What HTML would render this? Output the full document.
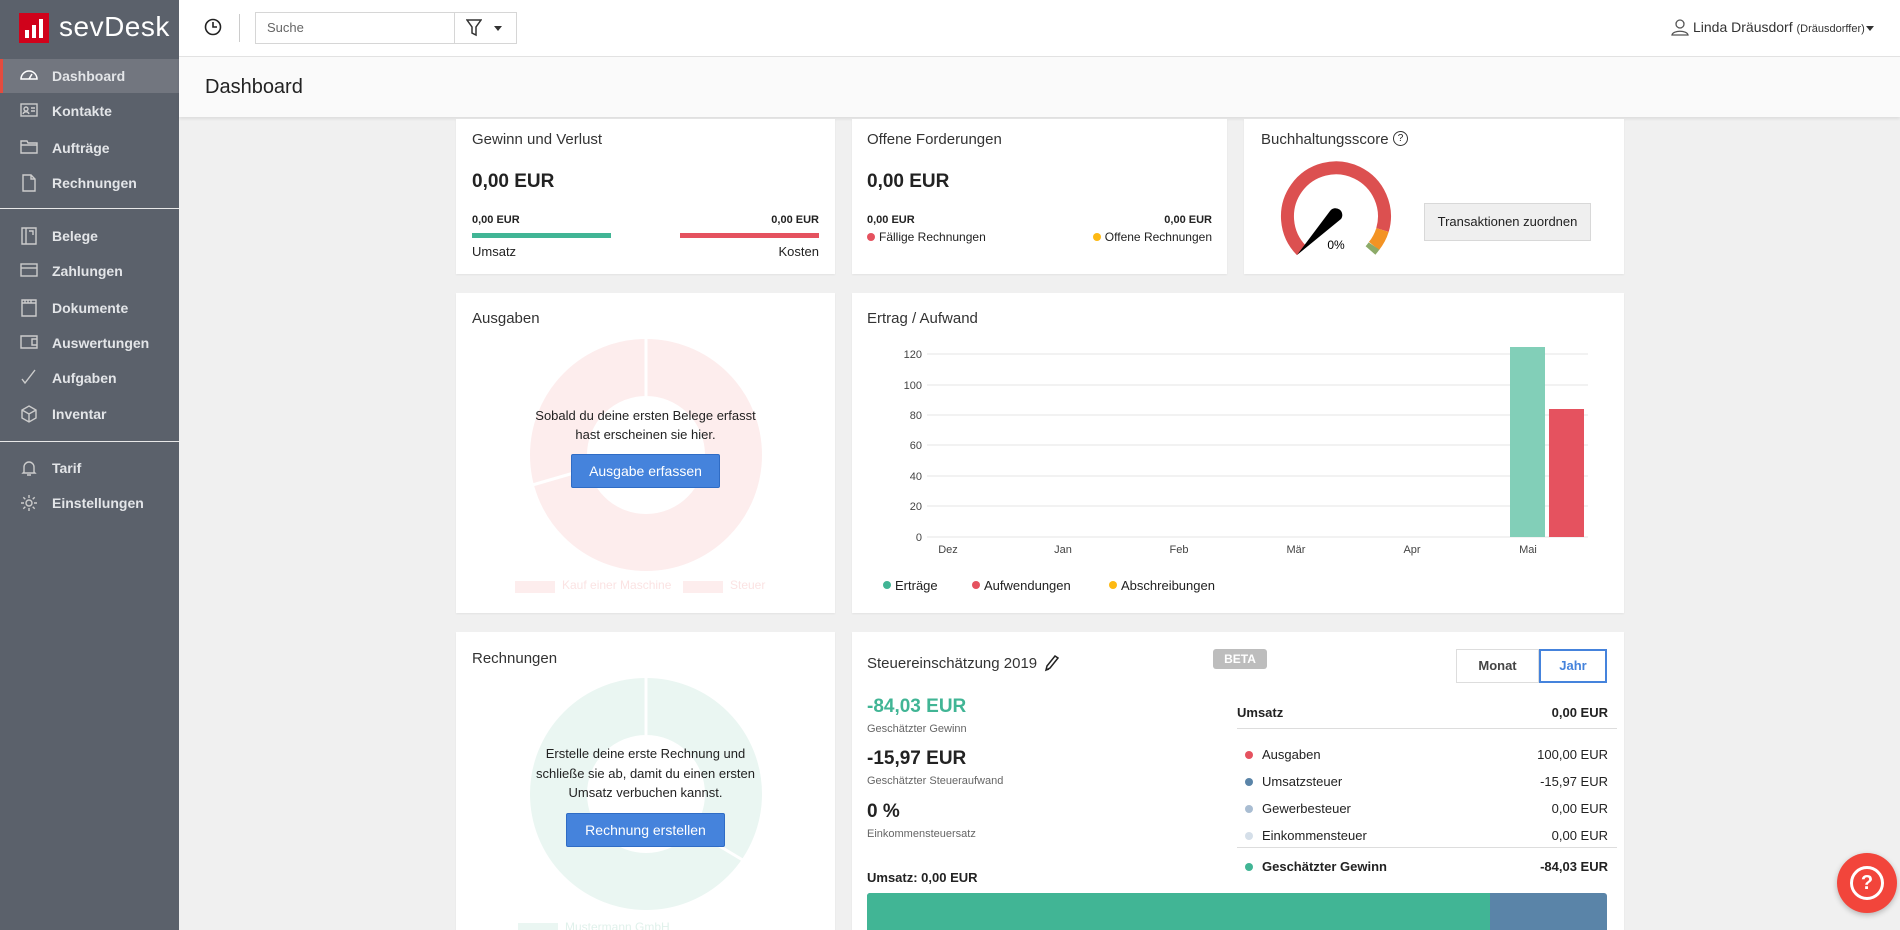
<!DOCTYPE html>
<html style="overflow:hidden;width:1900px;height:930px"><head><meta charset="utf-8"><style>
*{box-sizing:border-box;margin:0;padding:0}
body{width:1900px;height:930px;overflow:hidden;background:#f0f0f0;font-family:"Liberation Sans",sans-serif;color:#222;position:relative}
.a{position:absolute;white-space:nowrap}
#side{position:absolute;left:0;top:0;width:179px;height:930px;background:#5b616b}
.nav{position:absolute;left:0;width:179px;height:36px;color:#e3e5e8;font-weight:bold;font-size:14px;line-height:36px;padding-left:52px}
.nav svg{position:absolute;left:20px;top:9px}
.act{background:#72767f;border-left:3px solid #e44b3e;padding-left:49px}
.act svg{left:17px}
.sep{position:absolute;left:0;width:179px;height:2px;background:#e8e8e8}
.card{position:absolute;background:#fff;box-shadow:0 1px 2px rgba(0,0,0,.06);overflow:hidden}
.t{font-size:15px;color:#333}
.btn{position:absolute;background:#4583dc;border:1px solid #2f6cc5;color:#fff;font-size:14px;text-align:center;border-radius:2px}
</style></head><body>
<div id="side">
 <div class="a" style="left:19px;top:13px;width:30px;height:30px;background:#d0021b"></div>
 <div class="a" style="left:25px;top:30px;width:4px;height:8px;background:#fff"></div>
 <div class="a" style="left:32px;top:25px;width:4px;height:13px;background:#fff"></div>
 <div class="a" style="left:39px;top:19px;width:4px;height:19px;background:#fff"></div>
 <div class="a" style="left:59px;top:11px;font-size:28px;color:#fff;letter-spacing:.5px"><span style="font-weight:300">sev</span>Desk</div>
 <div class="nav act" style="top:59px;height:34px;line-height:34px"><svg width="18" height="16" viewBox="0 0 18 16" fill="none" stroke="#fff" stroke-width="1.5"><path d="M1 11a8 8 0 0 1 16 0z M9 11l3-5"/></svg>Dashboard</div>
 <div class="nav" style="top:93px"><svg width="18" height="16" viewBox="0 0 18 16" fill="none" stroke="#ccc" stroke-width="1.4"><rect x="1" y="2" width="16" height="12"/><circle cx="6" cy="7" r="2"/><path d="M3 12c1-3 5-3 6 0M11 6h4M11 9h4"/></svg>Kontakte</div>
 <div class="nav" style="top:130px"><svg width="18" height="16" viewBox="0 0 18 16" fill="none" stroke="#ccc" stroke-width="1.4"><path d="M1 2h6l1 2h9v10H1zM1 6h16"/></svg>Aufträge</div>
 <div class="nav" style="top:165px"><svg width="18" height="18" viewBox="0 0 18 18" fill="none" stroke="#ccc" stroke-width="1.4"><path d="M3 1h8l4 4v12H3zM11 1v4h4"/></svg>Rechnungen</div>
 <div class="sep" style="top:208px;height:1px"></div>
 <div class="nav" style="top:218px"><svg width="18" height="18" viewBox="0 0 18 18" fill="none" stroke="#ccc" stroke-width="1.4"><path d="M2 1h14v16H2zM6 1v16M9 4h4v4"/></svg>Belege</div>
 <div class="nav" style="top:253px"><svg width="18" height="16" viewBox="0 0 18 16" fill="none" stroke="#ccc" stroke-width="1.4"><rect x="1" y="2" width="16" height="12"/><path d="M1 6h16"/></svg>Zahlungen</div>
 <div class="nav" style="top:290px"><svg width="18" height="18" viewBox="0 0 18 18" fill="none" stroke="#ccc" stroke-width="1.4"><path d="M2 1h14v16H2zM2 4h14M5 1v3M8 1v3M11 1v3"/></svg>Dokumente</div>
 <div class="nav" style="top:325px"><svg width="18" height="16" viewBox="0 0 18 16" fill="none" stroke="#ccc" stroke-width="1.4"><path d="M1 2h16v12H1zM17 5h-5v6h5"/></svg>Auswertungen</div>
 <div class="nav" style="top:360px"><svg width="18" height="16" viewBox="0 0 18 16" fill="none" stroke="#ccc" stroke-width="1.4"><path d="M2 10l3 4L15 1"/></svg>Aufgaben</div>
 <div class="nav" style="top:396px"><svg width="18" height="18" viewBox="0 0 18 18" fill="none" stroke="#ccc" stroke-width="1.4"><path d="M9 1l7 4v8l-7 4-7-4V5zM2 5l7 4 7-4M9 9v8"/></svg>Inventar</div>
 <div class="sep" style="top:441px;height:1px"></div>
 <div class="nav" style="top:450px"><svg width="18" height="18" viewBox="0 0 18 18" fill="none" stroke="#ccc" stroke-width="1.4"><path d="M4 13V8a5 5 0 0 1 10 0v5l1 1H3zM7 16h4"/></svg>Tarif</div>
 <div class="nav" style="top:485px"><svg width="18" height="18" viewBox="0 0 18 18" fill="none" stroke="#ccc" stroke-width="1.4"><circle cx="9" cy="9" r="3"/><path d="M9 1v3M9 14v3M1 9h3M14 9h3M3.3 3.3l2 2M12.7 12.7l2 2M3.3 14.7l2-2M12.7 5.3l2-2"/></svg>Einstellungen</div>
</div>
<!-- topbar -->
<div class="a" style="left:179px;top:0;width:1721px;height:57px;background:#fff;border-bottom:1px solid #e2e2e2"></div>
<svg class="a" style="left:204px;top:18px" width="18" height="18" viewBox="0 0 18 18" fill="none" stroke="#222" stroke-width="1.6"><circle cx="9" cy="9" r="7.5"/><path d="M9 4v5h4"/></svg>
<div class="a" style="left:239px;top:14px;width:1px;height:28px;background:#ccc"></div>
<div class="a" style="left:255px;top:12px;width:262px;height:32px;border:1px solid #d6d6d6;background:#fff"></div>
<div class="a" style="left:454px;top:12px;width:1px;height:32px;background:#d6d6d6"></div>
<div class="a" style="left:267px;top:20px;font-size:13px;color:#666">Suche</div>
<svg class="a" style="left:466px;top:19px" width="16" height="18" viewBox="0 0 16 18" fill="none" stroke="#333" stroke-width="1.5"><path d="M1 1h14l-5 7v8l-4-2V8z"/></svg>
<div class="a" style="left:494px;top:26px;width:0;height:0;border-left:4px solid transparent;border-right:4px solid transparent;border-top:5px solid #333"></div>
<svg class="a" style="left:1671px;top:18px" width="18" height="18" viewBox="0 0 18 18" fill="none" stroke="#555" stroke-width="1.3"><circle cx="9" cy="6" r="4"/><path d="M1 17c1-5 15-5 16 0z"/></svg>
<div class="a" style="left:1693px;top:19px;font-size:14px;color:#333">Linda Dräusdorf <span style="font-size:11px">(Dräusdorffer)</span></div>
<div class="a" style="left:1866px;top:26px;width:0;height:0;border-left:4px solid transparent;border-right:4px solid transparent;border-top:5px solid #333"></div>
<!-- header -->
<div class="a" style="left:179px;top:57px;width:1721px;height:60px;background:#fafafa;box-shadow:0 2px 3px rgba(0,0,0,.08)"></div>
<div class="a" style="left:205px;top:76px;font-size:20px;color:#222">Dashboard</div>

<!-- row1 -->
<div class="card" style="left:456px;top:119px;width:379px;height:155px">
 <div class="a t" style="left:16px;top:12px">Gewinn und Verlust</div>
 <div class="a" style="left:16px;top:52px;font-size:19px;font-weight:bold">0,00 EUR</div>
 <div class="a" style="left:16px;top:95px;font-size:11px;font-weight:bold">0,00 EUR</div>
 <div class="a" style="right:16px;top:95px;font-size:11px;font-weight:bold">0,00 EUR</div>
 <div class="a" style="left:16px;top:114px;width:139px;height:5px;background:#41b595"></div>
 <div class="a" style="left:224px;top:114px;width:139px;height:5px;background:#e5525f"></div>
 <div class="a" style="left:16px;top:125px;font-size:13px">Umsatz</div>
 <div class="a" style="right:16px;top:125px;font-size:13px">Kosten</div>
</div>
<div class="card" style="left:852px;top:119px;width:375px;height:155px">
 <div class="a t" style="left:15px;top:12px">Offene Forderungen</div>
 <div class="a" style="left:15px;top:52px;font-size:19px;font-weight:bold">0,00 EUR</div>
 <div class="a" style="left:15px;top:95px;font-size:11px;font-weight:bold">0,00 EUR</div>
 <div class="a" style="right:15px;top:95px;font-size:11px;font-weight:bold">0,00 EUR</div>
 <div class="a" style="left:15px;top:111px;font-size:12px"><span style="display:inline-block;width:8px;height:8px;border-radius:50%;background:#e5525f;margin-right:4px"></span>Fällige Rechnungen</div>
 <div class="a" style="right:15px;top:111px;font-size:12px"><span style="display:inline-block;width:8px;height:8px;border-radius:50%;background:#fdb913;margin-right:4px"></span>Offene Rechnungen</div>
</div>
<div class="card" style="left:1244px;top:119px;width:380px;height:155px">
 <div class="a t" style="left:17px;top:12px">Buchhaltungsscore</div>
 <div class="a" style="left:149px;top:12px;width:15px;height:15px;border:1.3px solid #333;border-radius:50%;font-size:10px;text-align:center;line-height:13px">?</div>
 <svg class="a" style="left:0;top:0" width="380" height="155">
  <g transform="translate(92,97)" fill="none" stroke-width="13">
   <path d="M-34.5 34.5 A48.5 48.5 0 1 1 46.5 14" stroke="#dc5050"/>
   <path d="M46.5 14 A48.5 48.5 0 0 1 38 30" stroke="#f39324"/>
   <path d="M38 30 A48.5 48.5 0 0 1 34.5 34.5" stroke="#8caa68"/>
  </g>
  <path d="M53 136 L86 92 A6 6 0 0 1 97 100 Z" fill="#000"/>
  <text x="92" y="130" font-size="12" text-anchor="middle" font-family="Liberation Sans">0%</text>
 </svg>
 <div class="a" style="left:180px;top:84px;width:167px;height:38px;background:#efefef;border:1px solid #d8d8d8;font-size:13px;line-height:36px;text-align:center">Transaktionen zuordnen</div>
</div>

<!-- row2 -->
<div class="card" style="left:456px;top:293px;width:379px;height:320px">
 <div class="a t" style="left:16px;top:17px">Ausgaben</div>
 <svg class="a" style="left:0;top:0" width="379" height="320"><g transform="translate(190,162)" fill="none" stroke="#fdeded" stroke-width="57"><circle r="87.5"/></g><path d="M190 45v58M128 177l-55 16" stroke="#fff" stroke-width="3"/></svg>
 <div class="a" style="left:0;width:379px;top:113px;text-align:center;font-size:13px;line-height:19px;white-space:normal">Sobald du deine ersten Belege erfasst<br>hast erscheinen sie hier.</div>
 <div class="btn" style="left:115px;top:161px;width:149px;height:34px;line-height:32px">Ausgabe erfassen</div>
 <div class="a" style="left:59px;top:288px;width:40px;height:12px;background:#fdeded"></div>
 <div class="a" style="left:106px;top:285px;font-size:12px;color:#fbe3e3">Kauf einer Maschine</div>
 <div class="a" style="left:227px;top:288px;width:40px;height:12px;background:#fdeded"></div>
 <div class="a" style="left:274px;top:285px;font-size:12px;color:#fbe3e3">Steuer</div>
</div>
<div class="card" style="left:852px;top:293px;width:772px;height:320px">
 <div class="a t" style="left:15px;top:17px">Ertrag / Aufwand</div>
 <svg class="a" style="left:0;top:0" width="772" height="320" font-family="Liberation Sans" font-size="11" fill="#444">
  <g stroke="#e4e4e4" stroke-width="1">
   <line x1="75" x2="736" y1="61" y2="61"/><line x1="75" x2="736" y1="92" y2="92"/><line x1="75" x2="736" y1="122" y2="122"/><line x1="75" x2="736" y1="152" y2="152"/><line x1="75" x2="736" y1="183" y2="183"/><line x1="75" x2="736" y1="213" y2="213"/><line x1="75" x2="736" y1="244" y2="244"/>
  </g>
  <g text-anchor="end"><text x="70" y="65">120</text><text x="70" y="96">100</text><text x="70" y="126">80</text><text x="70" y="156">60</text><text x="70" y="187">40</text><text x="70" y="217">20</text><text x="70" y="248">0</text></g>
  <g text-anchor="middle"><text x="96" y="260">Dez</text><text x="211" y="260">Jan</text><text x="327" y="260">Feb</text><text x="444" y="260">Mär</text><text x="560" y="260">Apr</text><text x="676" y="260">Mai</text></g>
  <rect x="658" y="54" width="35" height="190" fill="#82cfb8"/>
  <rect x="697" y="116" width="35" height="128" fill="#e5525f"/>
  <circle cx="35" cy="292" r="4" fill="#41b595"/><text x="43" y="297" font-size="13" fill="#222">Erträge</text>
  <circle cx="124" cy="292" r="4" fill="#e5525f"/><text x="132" y="297" font-size="13" fill="#222">Aufwendungen</text>
  <circle cx="261" cy="292" r="4" fill="#fdb913"/><text x="269" y="297" font-size="13" fill="#222">Abschreibungen</text>
 </svg>
</div>

<!-- row3 -->
<div class="card" style="left:456px;top:632px;width:379px;height:298px">
 <div class="a t" style="left:16px;top:18px">Rechnungen</div>
 <svg class="a" style="left:0;top:0" width="379" height="298"><g transform="translate(190,162)" fill="none" stroke="#eaf6f2" stroke-width="57"><circle r="87.5"/></g><path d="M190 45v58M240 200l50 30" stroke="#fff" stroke-width="3"/></svg>
 <div class="a" style="left:0;width:379px;top:112px;text-align:center;font-size:13px;line-height:19.5px;white-space:normal">Erstelle deine erste Rechnung und<br>schließe sie ab, damit du einen ersten<br>Umsatz verbuchen kannst.</div>
 <div class="btn" style="left:110px;top:181px;width:159px;height:34px;line-height:32px">Rechnung erstellen</div>
 <div class="a" style="left:62px;top:291px;width:40px;height:12px;background:#eaf6f2"></div>
 <div class="a" style="left:109px;top:288px;font-size:12px;color:#e0f1eb">Mustermann GmbH</div>
</div>
<div class="card" style="left:852px;top:632px;width:772px;height:298px">
 <div class="a" style="left:15px;top:23px;font-size:15px;color:#333">Steuereinschätzung 2019</div>
 <svg class="a" style="left:191px;top:22px" width="16" height="18" viewBox="0 0 16 18" fill="none" stroke="#222" stroke-width="1.5"><path d="M3 16l1-4 8-10 3 2-8 10zM3 16l3-1"/></svg>
 <div class="a" style="left:361px;top:17px;width:54px;height:20px;background:#bdbdbd;border-radius:3px;color:#fff;font-weight:bold;font-size:12px;text-align:center;line-height:20px">BETA</div>
 <div class="a" style="left:604px;top:17px;width:83px;height:34px;border:1px solid #ddd;font-weight:bold;font-size:13px;color:#444;text-align:center;line-height:32px">Monat</div>
 <div class="a" style="left:687px;top:17px;width:68px;height:34px;border:2px solid #4583dc;font-weight:bold;font-size:13px;color:#4583dc;text-align:center;line-height:30px">Jahr</div>
 <div class="a" style="left:15px;top:64px;font-size:19px;font-weight:bold;color:#41b595">-84,03 EUR</div>
 <div class="a" style="left:15px;top:91px;font-size:11px;color:#666">Geschätzter Gewinn</div>
 <div class="a" style="left:15px;top:116px;font-size:19px;font-weight:bold">-15,97 EUR</div>
 <div class="a" style="left:15px;top:143px;font-size:11px;color:#666">Geschätzter Steueraufwand</div>
 <div class="a" style="left:15px;top:169px;font-size:19px;font-weight:bold">0 %</div>
 <div class="a" style="left:15px;top:196px;font-size:11px;color:#666">Einkommensteuersatz</div>
 <div class="a" style="left:15px;top:238px;font-size:13px;font-weight:bold">Umsatz: 0,00 EUR</div>
 <div class="a" style="left:15px;top:261px;width:740px;height:60px;background:#5a84a8;border-radius:3px 3px 0 0"></div>
 <div class="a" style="left:15px;top:261px;width:623px;height:60px;background:#41b595;border-radius:3px 0 0 0"></div>
 <div class="a" style="left:385px;top:73px;font-size:13px;font-weight:bold">Umsatz</div>
 <div class="a" style="right:16px;top:73px;font-size:13px;font-weight:bold">0,00 EUR</div>
 <div class="a" style="left:385px;top:96px;width:380px;height:1px;background:#ddd"></div>
 <div class="a" style="left:385px;top:109px;width:371px;font-size:13px;line-height:27px">
  <div><span style="display:inline-block;width:8px;height:8px;border-radius:50%;background:#e5525f;margin:0 9px 0 8px"></span>Ausgaben<span style="float:right">100,00 EUR</span></div>
  <div><span style="display:inline-block;width:8px;height:8px;border-radius:50%;background:#5a84a8;margin:0 9px 0 8px"></span>Umsatzsteuer<span style="float:right">-15,97 EUR</span></div>
  <div><span style="display:inline-block;width:8px;height:8px;border-radius:50%;background:#a9bdd2;margin:0 9px 0 8px"></span>Gewerbesteuer<span style="float:right">0,00 EUR</span></div>
  <div><span style="display:inline-block;width:8px;height:8px;border-radius:50%;background:#d5dfe9;margin:0 9px 0 8px"></span>Einkommensteuer<span style="float:right">0,00 EUR</span></div>
 </div>
 <div class="a" style="left:385px;top:215px;width:380px;height:1px;background:#ddd"></div>
 <div class="a" style="left:385px;top:225px;width:371px;font-size:13px;font-weight:bold;line-height:20px"><span style="display:inline-block;width:8px;height:8px;border-radius:50%;background:#41b595;margin:0 9px 0 8px"></span>Geschätzter Gewinn<span style="float:right">-84,03 EUR</span></div>
</div>
<!-- help -->
<div class="a" style="left:1837px;top:853px;width:60px;height:60px;border-radius:50%;background:#f2453b;box-shadow:0 2px 6px rgba(0,0,0,.25)"></div>
<div class="a" style="left:1850px;top:866px;width:34px;height:34px;border:3px solid #fff;border-radius:50%;color:#fff;font-weight:bold;font-size:20px;text-align:center;line-height:28px">?</div>
</body></html>
